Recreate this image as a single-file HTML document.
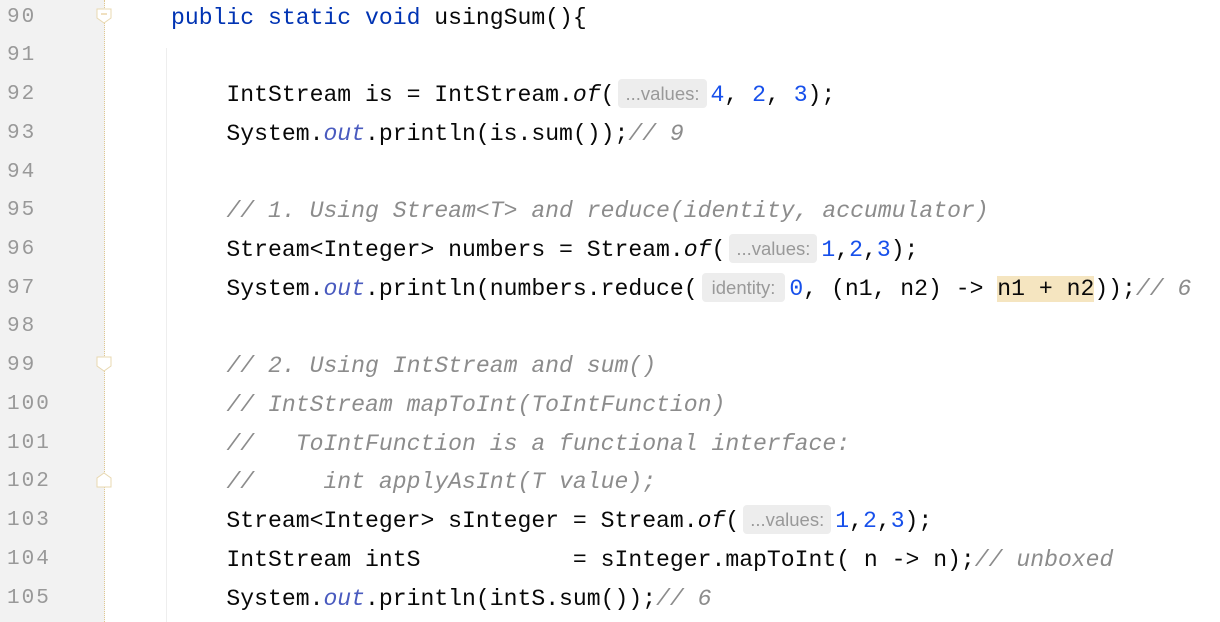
<!DOCTYPE html>
<html><head><style>
body{margin:0;width:1220px;height:622px;background:#fff;overflow:hidden;position:relative;font-family:"Liberation Mono",monospace;}
.gut{position:absolute;left:0;top:0;width:104px;height:622px;background:#f2f2f2;border-right:1px dotted #e0c890;}
.ln{position:absolute;left:7px;width:60px;color:#999;font-size:21px;letter-spacing:2px;height:38.73px;line-height:38.73px;}
.code{position:absolute;left:171px;white-space:pre;font-size:23.1px;height:38.73px;line-height:38.73px;color:#080808;}
.k{color:#0033b3}.n{color:#1750eb}.c{color:#8c8c8c;font-style:italic}.f{color:#4a5bbf;font-style:italic}.i{font-style:italic}
.h{display:inline-block;background:#ededed;color:#999;font-family:"Liberation Sans",sans-serif;font-size:18.5px;line-height:29px;border-radius:4px;padding:0 7px;margin:0 4px 0 4px;vertical-align:1px;}
.hl{background:#f5e5c0}
.guide{position:absolute;left:166px;top:48px;width:1px;height:574px;background:#eee;}
.fold{position:absolute;left:96px;width:16px;height:16px;}
</style></head><body>
<div class="gut"></div>
<div class="guide"></div>
<svg class="fold" style="top:8px" viewBox="0 0 16 16"><path d="M1 1H15V10L8 15L1 10Z" fill="#fff" stroke="#e8d8b0"/><path d="M5 6H11" stroke="#e0c080"/></svg>
<svg class="fold" style="top:356px" viewBox="0 0 16 16"><path d="M1 1H15V10L8 15L1 10Z" fill="#fff" stroke="#e8d8b0"/></svg>
<svg class="fold" style="top:472px" viewBox="0 0 16 16"><path d="M1 15H15V6L8 1L1 6Z" fill="#fff" stroke="#e8d8b0"/></svg>
<div class="ln" style="top:-1.4px">90</div>
<div class="ln" style="top:37.3px">91</div>
<div class="ln" style="top:76px">92</div>
<div class="ln" style="top:114.8px">93</div>
<div class="ln" style="top:153.5px">94</div>
<div class="ln" style="top:192.2px">95</div>
<div class="ln" style="top:230.9px">96</div>
<div class="ln" style="top:269.7px">97</div>
<div class="ln" style="top:308.4px">98</div>
<div class="ln" style="top:347.1px">99</div>
<div class="ln" style="top:385.9px">100</div>
<div class="ln" style="top:424.6px">101</div>
<div class="ln" style="top:463.3px">102</div>
<div class="ln" style="top:502.1px">103</div>
<div class="ln" style="top:540.8px">104</div>
<div class="ln" style="top:579.5px">105</div>

<div class="code" style="top:-1.4px"><span class="k">public static void</span> usingSum(){</div>
<div class="code" style="top:76px">    IntStream is = IntStream.<span class="i">of</span>(<span class="h">...values:</span><span class="n">4</span>, <span class="n">2</span>, <span class="n">3</span>);</div>
<div class="code" style="top:114.8px">    System.<span class="f">out</span>.println(is.sum());<span class="c">// 9</span></div>
<div class="code" style="top:192.2px">    <span class="c">// 1. Using Stream&lt;T&gt; and reduce(identity, accumulator)</span></div>
<div class="code" style="top:230.9px">    Stream&lt;Integer&gt; numbers = Stream.<span class="i">of</span>(<span class="h">...values:</span><span class="n">1</span>,<span class="n">2</span>,<span class="n">3</span>);</div>
<div class="code" style="top:269.7px">    System.<span class="f">out</span>.println(numbers.reduce(<span class="h" style="padding:0 10px">identity:</span><span class="n">0</span>, (n1, n2) -&gt; <span class="hl">n1 + n2</span>));<span class="c">// 6</span></div>
<div class="code" style="top:347.1px">    <span class="c">// 2. Using IntStream and sum()</span></div>
<div class="code" style="top:385.9px">    <span class="c">// IntStream mapToInt(ToIntFunction)</span></div>
<div class="code" style="top:424.6px">    <span class="c">//   ToIntFunction is a functional interface:</span></div>
<div class="code" style="top:463.3px">    <span class="c">//     int applyAsInt(T value);</span></div>
<div class="code" style="top:502.1px">    Stream&lt;Integer&gt; sInteger = Stream.<span class="i">of</span>(<span class="h">...values:</span><span class="n">1</span>,<span class="n">2</span>,<span class="n">3</span>);</div>
<div class="code" style="top:540.8px">    IntStream intS           = sInteger.mapToInt( n -&gt; n);<span class="c">// unboxed</span></div>
<div class="code" style="top:579.5px">    System.<span class="f">out</span>.println(intS.sum());<span class="c">// 6</span></div>
</body></html>
